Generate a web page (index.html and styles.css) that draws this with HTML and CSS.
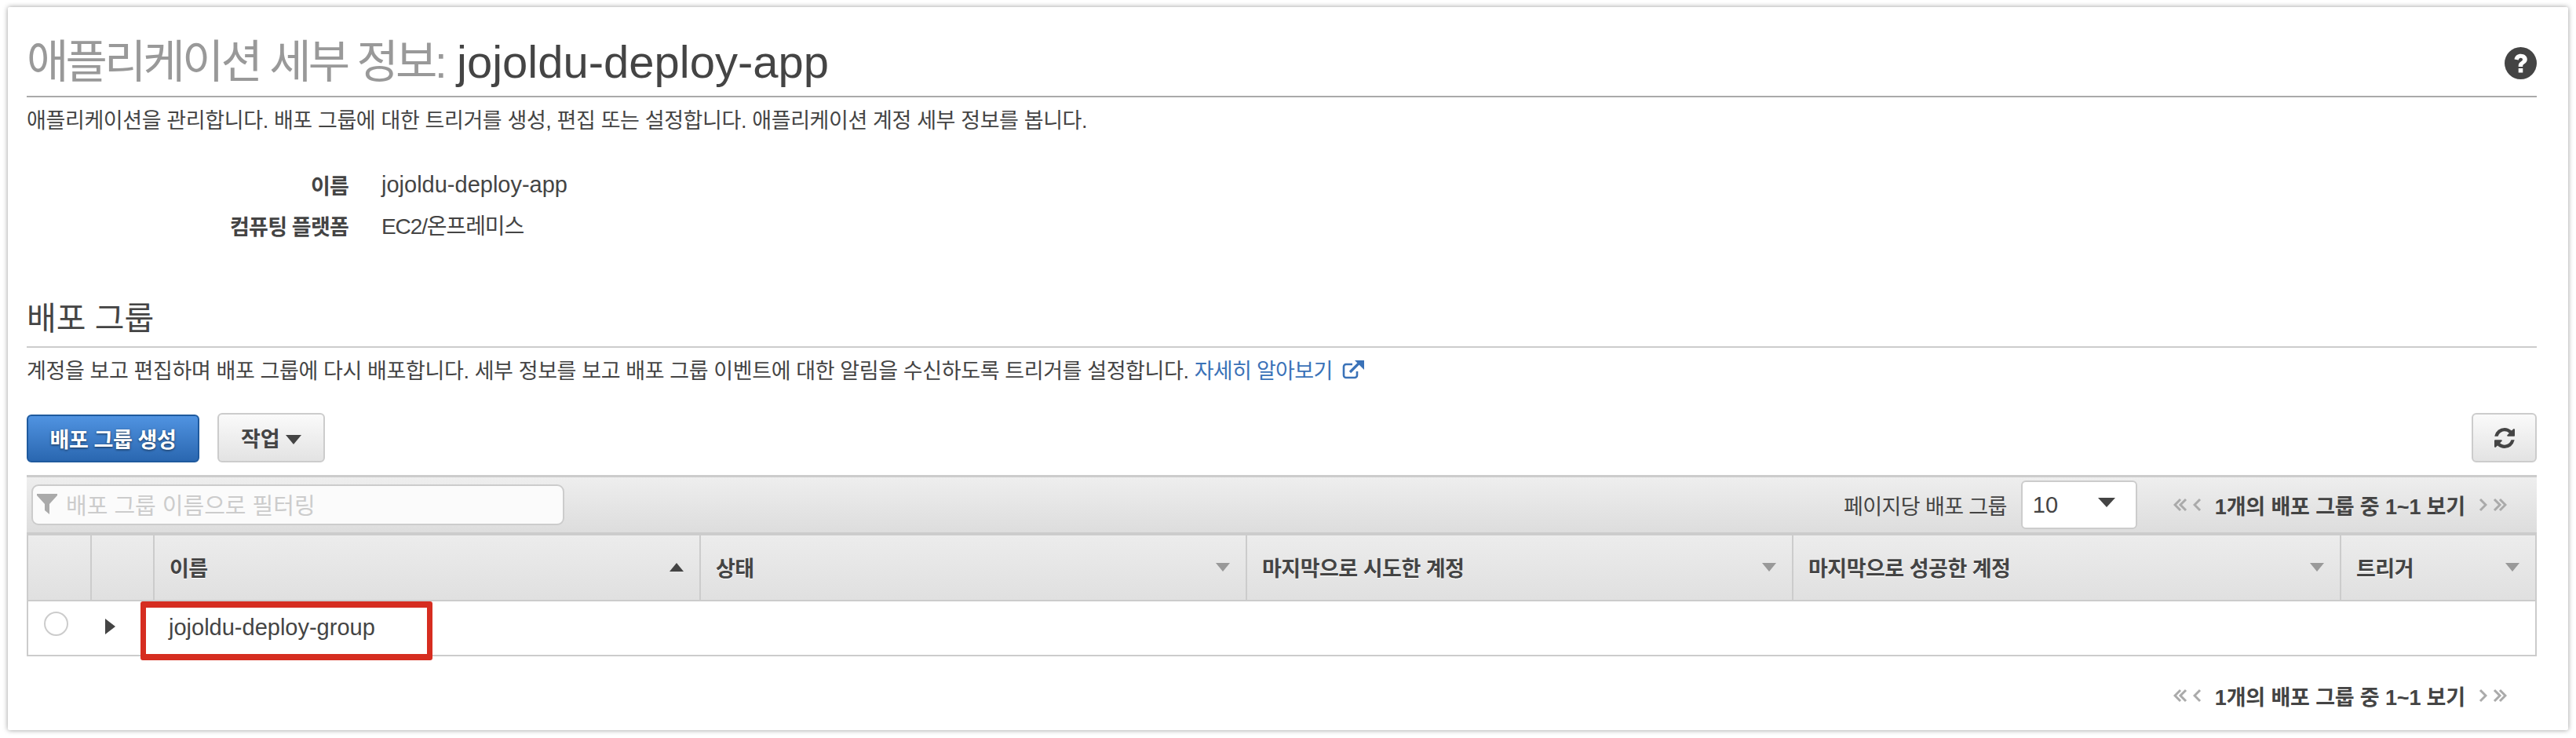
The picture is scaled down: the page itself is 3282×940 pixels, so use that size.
FILE: index.html
```html
<!DOCTYPE html>
<html lang="ko">

<head>
    <meta charset="UTF-8">
    <meta name="viewport" content="width=device-width, initial-scale=1.0">
    <title>애플리케이션 세부 정보</title>
    <link rel="stylesheet" href="styles.css">
</head>

<body>
    <div class="panel">
        <div class="page-head">
            <h1><span class="head-label">애플리케이션 세부 정보:</span> jojoldu-deploy-app</h1>
            <svg class="help-icon" viewBox="0 0 41 41">
                <circle cx="20.5" cy="20.5" r="20.5" fill="#444"></circle>
                <path d="M12.5 15.5c.6-4 3.8-6.7 8.2-6.7 4.600 0 8.100 2.900 8.100 6.800 0 3-1.700 4.500-3.500 5.700-1.500 1-2.100 1.600-2.100 2.900v.8h-5.500v-1.300c0-2.600 1.300-4 3.100-5.200 1.400-.9 2.200-1.600 2.200-2.700 0-1.200-1-2-2.400-2-1.500 0-2.500 1-2.800 2.600z M17.700 27h5.600v5.500h-5.600z" fill="#fff"></path>
            </svg>
        </div>
        <p class="desc desc-top">애플리케이션을 관리합니다. 배포 그룹에 대한 트리거를 생성, 편집 또는 설정합니다. 애플리케이션 계정 세부 정보를 봅니다.</p>

        <div class="info">
            <div class="info-label">이름</div>
            <div>jojoldu-deploy-app</div>
            <div class="info-label">컴퓨팅 플랫폼</div>
            <div class="info-platform">EC2/온프레미스</div>
        </div>

        <h2 class="section-title">배포 그룹</h2>
        <p class="desc desc-section">계정을 보고 편집하며 배포 그룹에 다시 배포합니다. 세부 정보를 보고 배포 그룹 이벤트에 대한 알림을 수신하도록 트리거를 설정합니다.
            <a class="learn-more" href="#">자세히 알아보기
                <svg class="ext-icon" viewBox="0 0 28 24">
                    <path d="M19 14v5a3 3 0 0 1-3 3H5a3 3 0 0 1-3-3V8a3 3 0 0 1 3-3h8" fill="none" stroke="#3a72b8" stroke-width="2.600"></path>
                    <path d="M10 15L22 3" fill="none" stroke="#3a72b8" stroke-width="3.200"></path>
                    <path d="M16 0h12v12z" fill="#3a72b8"></path>
                </svg>
            </a>
        </p>

        <div class="actions">
            <button class="btn btn-primary">배포 그룹 생성</button>
            <button class="btn btn-menu">작업 <span class="caret"></span></button>
            <button class="btn btn-refresh">
                <svg viewBox="0 0 1536 1536">
                    <path d="M1511 928q0 5-1 7-64 268-268 434.500t-478 166.500q-146 0-282.500-55t-243.500-157l-129 129q-19 19-45 19t-45-19-19-45v-448q0-26 19-45t45-19h448q26 0 45 19t19 45-19 45l-137 137q71 66 161 102t187 36q134 0 250-65t186-179q11-17 53-117 8-23 30-23h192q13 0 22.500 9.500t9.500 22.500zm25-800v448q0 26-19 45t-45 19h-448q-26 0-45-19t-19-45 19-45l138-138q-148-137-349-137-134 0-250 65t-186 179q-11 17-53 117-8 23-30 23h-199q-13 0-22.500-9.500t-9.500-22.500v-7q65-268 270-434.500t480-166.500q146 0 284 55.500t245 156.500l130-129q19-19 45-19t45 19 19 45z" fill="#444"></path>
                </svg>
            </button>
        </div>

        <div class="toolbar">
            <div class="filter">
                <svg class="filter-icon" viewBox="0 0 26 26">
                    <path d="M0 0h26v2L16 13v13l-6-5v-8L0 2z" fill="#aaa"></path>
                </svg>
                <span>배포 그룹 이름으로 필터링</span>
            </div>
            <span class="per-page">페이지당 배포 그룹</span>
            <div class="page-select">
                <span>10</span>
                <span class="caret caret-select"></span>
            </div>
            <div class="pager">
                <svg class="chev-double" viewBox="0 0 18 18"><path d="M9 2L2 9l7 7M16 2L9 9l7 7" fill="none" stroke="#aaa" stroke-width="3"></path></svg>
                <svg class="chev" viewBox="0 0 11 18"><path d="M9 2L2 9l7 7" fill="none" stroke="#aaa" stroke-width="3"></path></svg>
                <strong>1개의 배포 그룹 중 1~1 보기</strong>
                <svg class="chev" viewBox="0 0 11 18"><path d="M2 2l7 7-7 7" fill="none" stroke="#aaa" stroke-width="3"></path></svg>
                <svg class="chev-double" viewBox="0 0 18 18"><path d="M2 2l7 7-7 7M9 2l7 7-7 7" fill="none" stroke="#aaa" stroke-width="3"></path></svg>
            </div>
        </div>

        <div class="grid-table">
            <div class="grid-head">
                <div class="th"></div>
                <div class="th"></div>
                <div class="th"><span>이름</span><i class="sort sort-up"></i></div>
                <div class="th"><span>상태</span><i class="sort"></i></div>
                <div class="th"><span>마지막으로 시도한 계정</span><i class="sort"></i></div>
                <div class="th"><span>마지막으로 성공한 계정</span><i class="sort"></i></div>
                <div class="th"><span>트리거</span><i class="sort"></i></div>
            </div>
            <div class="grid-row">
                <div class="td td-center"><span class="radio"></span></div>
                <div class="td td-center"><span class="expand"></span></div>
                <div class="td td-name">jojoldu-deploy-group</div>
                <div class="highlight"></div>
            </div>
        </div>

        <div class="pager pager-bottom">
            <svg class="chev-double" viewBox="0 0 18 18"><path d="M9 2L2 9l7 7M16 2L9 9l7 7" fill="none" stroke="#aaa" stroke-width="3"></path></svg>
            <svg class="chev" viewBox="0 0 11 18"><path d="M9 2L2 9l7 7" fill="none" stroke="#aaa" stroke-width="3"></path></svg>
            <strong>1개의 배포 그룹 중 1~1 보기</strong>
            <svg class="chev" viewBox="0 0 11 18"><path d="M2 2l7 7-7 7" fill="none" stroke="#aaa" stroke-width="3"></path></svg>
            <svg class="chev-double" viewBox="0 0 18 18"><path d="M2 2l7 7-7 7M9 2l7 7-7 7" fill="none" stroke="#aaa" stroke-width="3"></path></svg>
        </div>
    </div>
</body>

</html>
```

FILE: styles.css
```css
* {
    margin: 0;
    padding: 0;
    box-sizing: border-box;
}

body {
    background-color: #fff;
    color: #444;
    font-family: "Liberation Sans", "Noto Sans CJK KR", sans-serif;
    font-size: 27px;
    padding: 9px 10px 10px;
}

.panel {
    height: 921px;
    background-color: #fff;
    box-shadow: 0 0 6px rgba(0, 0, 0, 0.4);
    padding: 0 40px 0 24px;
    border-radius: 2px;
}

.page-head {
    height: 115px;
    display: flex;
    justify-content: space-between;
    align-items: flex-end;
    border-bottom: 2px solid #aaa;
}

h1 {
    font-size: 58px;
    font-weight: normal;
    line-height: 70px;
    height: 78px;
    white-space: nowrap;
}

.head-label {
    color: #999;
    letter-spacing: -3.85px;
}

.help-icon {
    width: 41px;
    height: 41px;
    margin: 0 0 21px;
}

.desc {
    height: 42px;
    line-height: 42px;
    margin-top: 8px;
    white-space: nowrap;
    letter-spacing: -0.38px;
}

.desc-top {
    margin-top: 9px;
    margin-bottom: -1px;
}

.info {
    display: grid;
    grid-template-columns: 410px auto;
    column-gap: 42px;
    grid-auto-rows: 52px;
    align-items: center;
    margin-top: 35px;
    font-size: 29px;
}

.info-label {
    font-size: 27px;
    font-weight: bold;
    text-align: right;
    letter-spacing: -0.8px;
}

.info-platform {
    font-size: 28px;
    letter-spacing: -1.1px;
    margin-top: -3px;
}

.section-title {
    font-size: 41px;
    font-weight: normal;
    height: 50px;
    line-height: 50px;
    margin-top: 68px;
    padding-bottom: 10px;
    border-bottom: 2px solid #ccc;
    box-sizing: content-box;
}

.desc-section {
    margin-top: 9px;
}

.learn-more {
    color: #3a72b8;
    text-decoration: none;
    letter-spacing: -0.7px;
}

.ext-icon {
    width: 28px;
    height: 24px;
    margin-left: 6px;
    vertical-align: -1px;
}

.actions {
    display: flex;
    align-items: flex-end;
    gap: 23px;
    margin-top: 32px;
}

.btn {
    font-family: inherit;
    font-size: 27px;
    font-weight: bold;
    color: #444;
    border: 2px solid #ccc;
    border-radius: 6px;
    background: linear-gradient(#fafafa, #e3e3e3);
    height: 63px;
}

.btn-primary {
    width: 220px;
    height: 61px;
    color: #fff;
    border-color: #1f5a9e;
    background: linear-gradient(#5093e1, #2a67b0);
    text-shadow: 0 1px 3px rgba(0, 0, 0, 0.6);
    letter-spacing: -0.4px;
}

.btn-menu {
    width: 137px;
}

.btn-refresh {
    width: 83px;
    margin-left: auto;
}

.btn-refresh svg {
    width: 26px;
    height: 26px;
    display: block;
    margin: 0 auto;
}

.caret {
    display: inline-block;
    width: 0;
    height: 0;
    border-style: solid;
    border-width: 12px 10px 0;
    border-color: #444 transparent transparent;
    vertical-align: 3px;
}

.toolbar {
    height: 77px;
    margin-top: 16px;
    display: flex;
    align-items: center;
    padding: 0 38px 0 6px;
    border-top: 3px solid #ccc;
    border-bottom: 4px solid #ccc;
    background: linear-gradient(#eee, #ddd);
}

.filter {
    width: 679px;
    height: 52px;
    display: flex;
    align-items: center;
    gap: 11px;
    padding: 0 0 3px 5px;
    margin-right: auto;
    color: #ccc;
    font-size: 29px;
    background-color: #fbfbfb;
    border: 2px solid #ccc;
    border-radius: 9px;
}

.filter-icon {
    width: 26px;
    height: 26px;
}

.per-page {
    margin-right: 18px;
    letter-spacing: -0.6px;
}

.page-select {
    width: 148px;
    height: 62px;
    display: flex;
    justify-content: space-between;
    align-items: center;
    padding: 0 26px 0 13px;
    font-size: 29px;
    background-color: #fff;
    border: 2px solid #ccc;
    border-radius: 6px;
    margin-right: 46px;
}

.caret-select {
    border-width: 12px 11px 0;
    margin-bottom: 6px;
}

.pager {
    display: flex;
    align-items: center;
    gap: 7px;
}

.pager strong {
    margin: 0 10px;
    font-size: 27px;
    letter-spacing: -0.15px;
}

.chev-double {
    width: 18px;
    height: 18px;
}

.chev {
    width: 11px;
    height: 18px;
}

.grid-table {
    border: 2px solid #ccc;
    border-top: 0;
}

.grid-head,
.grid-row {
    display: grid;
    grid-template-columns: 79px 80px 696px 696px 696px 698px 249px;
}

.grid-head {
    height: 84px;
    border-bottom: 2px solid #ccc;
    background: linear-gradient(#ececec, #e0e0e0);
}

.th {
    display: flex;
    justify-content: space-between;
    align-items: center;
    padding: 0 20px 2px 19px;
    font-weight: bold;
    letter-spacing: -0.5px;
    text-shadow: 0 1px 0 #fff;
    border-left: 2px solid #ccc;
}

.th:first-child {
    border-left: 0;
}

.sort {
    width: 0;
    height: 0;
    border-style: solid;
    border-width: 11px 9px 0;
    border-color: #999 transparent transparent;
}

.sort-up {
    border-width: 0 9px 11px;
    border-color: transparent transparent #444;
}

.grid-row {
    height: 68px;
    position: relative;
}

.td {
    display: flex;
    align-items: center;
}

.td-center {
    justify-content: center;
}

.td-name {
    padding: 0 0 2px 20px;
    font-size: 29px;
    white-space: nowrap;
}

.radio {
    width: 31px;
    height: 31px;
    border: 2px solid #ccc;
    border-radius: 50%;
    margin: 0 8px 12px 0;
}

.expand {
    width: 0;
    height: 0;
    border-style: solid;
    border-width: 10px 0 10px 13px;
    border-color: transparent transparent transparent #444;
    margin: 0 30px 5px 0;
}

.highlight {
    position: absolute;
    left: 143px;
    top: 0;
    width: 372px;
    height: 75px;
    border: 8px solid #d62d20;
    border-left-width: 7px;
    border-right-width: 7px;
    border-radius: 3px;
}

.pager-bottom {
    justify-content: flex-end;
    height: 40px;
    margin-top: 30px;
    padding-right: 38px;
}
```
